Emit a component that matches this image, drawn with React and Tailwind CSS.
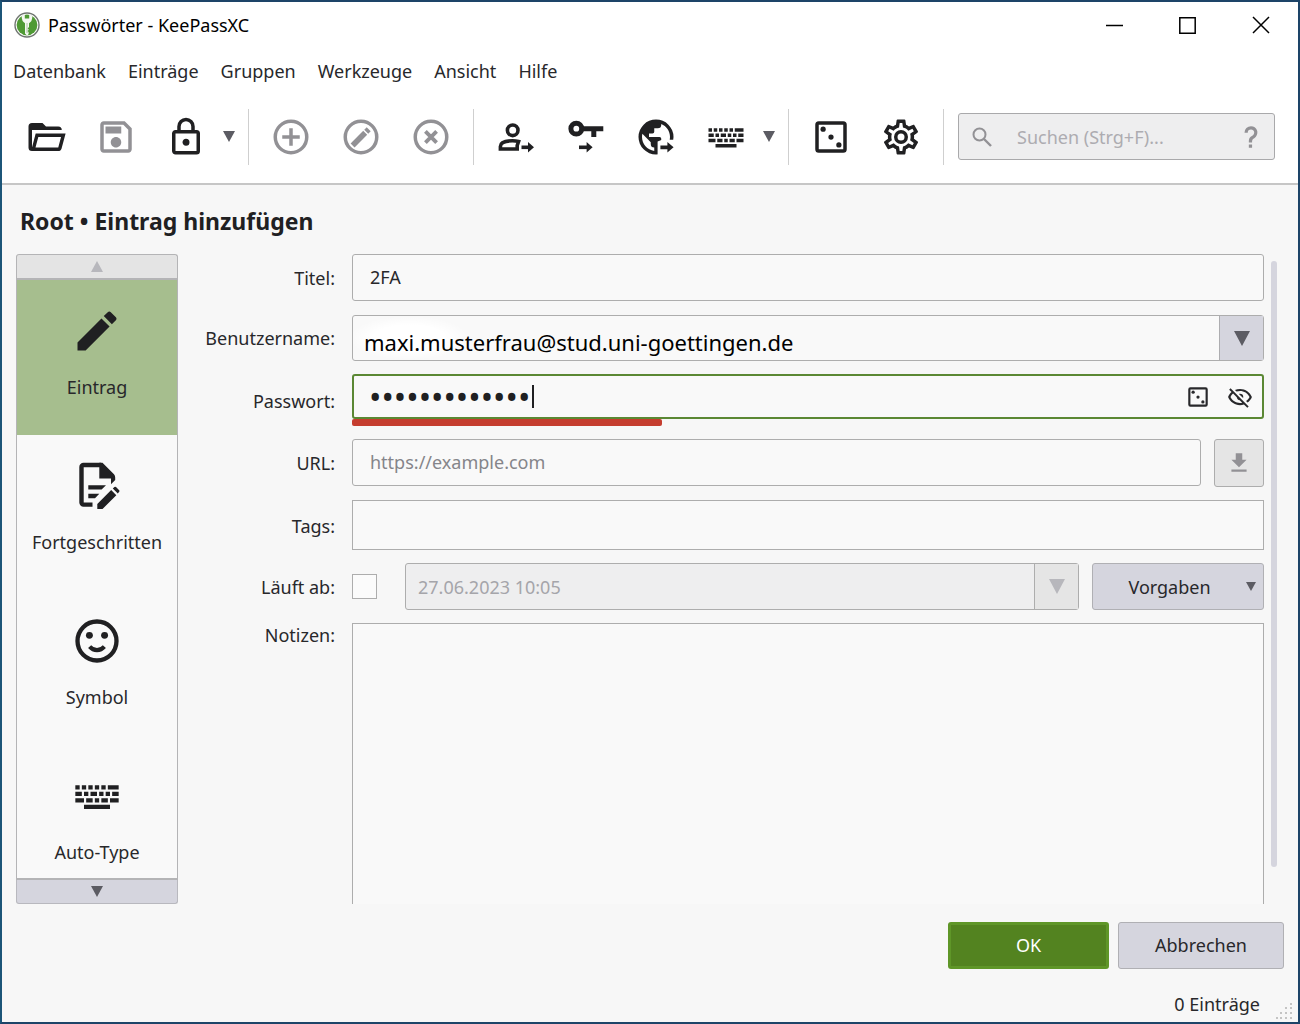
import React, { useState } from 'react';

const ICONS = {
  folder: 'M6.1,10L4,18V8H21A2,2 0 0,0 19,6H12L10,4H4A2,2 0 0,0 2,6V18A2,2 0 0,0 4,20H19C19.9,20 20.7,19.4 20.9,18.5L23.2,10H6.1M19,18H6L7.6,12H20.6L19,18Z',
  save: 'M17 3H5C3.89 3 3 3.9 3 5V19C3 20.1 3.89 21 5 21H19C20.1 21 21 20.1 21 19V7L17 3M19 19H5V5H16.17L19 7.83V19M12 12C10.34 12 9 13.34 9 15S10.34 18 12 18 15 16.66 15 15 13.66 12 12 12M6 6H15V10H6V6Z',
  lock: 'M12,17C10.89,17 10,16.1 10,15C10,13.89 10.89,13 12,13A2,2 0 0,1 14,15A2,2 0 0,1 12,17M18,20V10H6V20H18M18,8A2,2 0 0,1 20,10V20A2,2 0 0,1 18,22H6C4.89,22 4,21.1 4,20V10C4,8.89 4.89,8 6,8H7V6A5,5 0 0,1 12,1A5,5 0 0,1 17,6V8H18M12,3A3,3 0 0,0 9,6V8H15V6A3,3 0 0,0 12,3Z',
  keyboard: 'M6,16H18V18H6V16M6,13V15H2V13H6M7,15V13H10V15H7M11,15V13H13V15H11M14,15V13H17V15H14M18,15V13H22V15H18M2,10H5V12H2V10M19,12V10H22V12H19M18,12H16V10H18V12M8,12H6V10H8V12M12,12H9V10H12V12M15,12H13V10H15V12M2,9V7H4V9H2M5,9V7H7V9H5M8,9V7H10V9H8M11,9V7H13V9H11M14,9V7H16V9H14M17,9V7H22V9H17Z',
  gear: 'M12,8A4,4 0 0,1 16,12A4,4 0 0,1 12,16A4,4 0 0,1 8,12A4,4 0 0,1 12,8M12,10A2,2 0 0,0 10,12A2,2 0 0,0 12,14A2,2 0 0,0 14,12A2,2 0 0,0 12,10M10,22C9.75,22 9.54,21.82 9.5,21.58L9.13,18.93C8.5,18.68 7.96,18.34 7.44,17.94L4.95,18.95C4.73,19.03 4.46,18.95 4.34,18.73L2.34,15.27C2.21,15.05 2.27,14.78 2.46,14.63L4.57,12.97L4.5,12L4.57,11L2.46,9.37C2.27,9.22 2.21,8.95 2.34,8.73L4.34,5.27C4.46,5.05 4.73,4.96 4.95,5.05L7.44,6.05C7.96,5.66 8.5,5.32 9.13,5.07L9.5,2.42C9.54,2.18 9.75,2 10,2H14C14.25,2 14.46,2.18 14.5,2.42L14.87,5.07C15.5,5.32 16.04,5.66 16.56,6.05L19.05,5.05C19.27,4.96 19.54,5.05 19.66,5.27L21.66,8.73C21.79,8.95 21.73,9.22 21.54,9.37L19.43,11L19.5,12L19.43,13L21.54,14.63C21.73,14.78 21.79,15.05 21.66,15.27L19.66,18.73C19.54,18.95 19.27,19.04 19.05,18.95L16.56,17.95C16.04,18.34 15.5,18.68 14.87,18.93L14.5,21.58C14.46,21.82 14.25,22 14,22H10M11.25,4L10.88,6.61C9.68,6.86 8.62,7.5 7.85,8.39L5.44,7.35L4.69,8.65L6.8,10.2C6.4,11.37 6.4,12.64 6.8,13.8L4.68,15.36L5.43,16.66L7.86,15.62C8.63,16.5 9.68,17.14 10.87,17.38L11.24,20H12.76L13.13,17.39C14.32,17.14 15.37,16.5 16.14,15.62L18.57,16.66L19.32,15.36L17.2,13.81C17.6,12.64 17.6,11.37 17.2,10.2L19.31,8.65L18.56,7.35L16.15,8.39C15.38,7.5 14.32,6.86 13.12,6.62L12.75,4H11.25Z',
  pencil: 'M20.71,7.04C21.1,6.65 21.1,6 20.71,5.63L18.37,3.29C18,2.9 17.35,2.9 16.96,3.29L15.12,5.12L18.87,8.87M3,17.25V21H6.75L17.81,9.93L14.06,6.18L3,17.25Z',
  help: 'M10,19H13V22H10V19M12,2C17.35,2.22 19.68,7.62 16.5,11.67C15.67,12.67 14.33,13.33 13.67,14.17C13,15 13,16 13,17H10C10,15.33 10,13.92 10.67,12.92C11.33,11.92 12.67,11.33 13.5,10.67C15.92,8.43 15.32,5.26 12,5A3,3 0 0,0 9,8H6A6,6 0 0,1 12,2Z',
  eyeOff: 'M2,5.27L3.28,4L20,20.72L18.73,22L15.65,18.92C14.5,19.3 13.28,19.5 12,19.5C7,19.5 2.73,16.39 1,12C1.69,10.24 2.79,8.69 4.19,7.46L2,5.27M12,9A3,3 0 0,1 15,12C15,12.35 14.94,12.69 14.83,13L11,9.17C11.31,9.06 11.65,9 12,9M12,4.5C17,4.5 21.27,7.61 23,12C22.18,14.08 20.79,15.88 19,17.19L17.58,15.76C18.94,14.82 20.06,13.54 20.82,12C19.17,8.64 15.76,6.5 12,6.5C10.91,6.5 9.84,6.68 8.84,7L7.3,5.47C8.74,4.85 10.33,4.5 12,4.5M3.18,12C4.83,15.36 8.24,17.5 12,17.5C12.69,17.5 13.37,17.43 14,17.29L11.72,15C10.29,14.85 9.15,13.71 9,12.28L5.6,8.87C4.61,9.72 3.78,10.78 3.18,12Z',
  download: 'M5,20H19V18H5M19,9H15V3H9V9H5L12,16L19,9Z',
  earth: 'M17.9,17.39C17.64,16.59 16.89,16 16,16H15V13A1,1 0 0,0 14,12H8V10H10A1,1 0 0,0 11,9V7H13A2,2 0 0,0 15,5V4.59C17.93,5.77 20,8.64 20,12C20,14.08 19.2,15.97 17.9,17.39M11,19.93C7.05,19.44 4,16.08 4,12C4,11.38 4.08,10.78 4.21,10.21L9,15V16A2,2 0 0,0 11,18M12,2A10,10 0 0,0 2,12A10,10 0 0,0 12,22A10,10 0 0,0 22,12A10,10 0 0,0 12,2Z',
};

const Icon = ({ name, className }) => (
  <svg viewBox="0 0 24 24" fill="currentColor" fillRule="evenodd" className={className} aria-hidden="true">
    <path d={ICONS[name]} />
  </svg>
);

const Dice = ({ className }) => (
  <svg viewBox="0 0 24 24" fill="currentColor" className={className} aria-hidden="true">
    <rect x="4" y="4" width="16" height="16" rx="1" fill="none" stroke="currentColor" strokeWidth="2" />
    <circle cx="7.5" cy="7.5" r="1.5" />
    <circle cx="12" cy="12" r="1.5" />
    <circle cx="16.5" cy="16.5" r="1.5" />
  </svg>
);

const Circled = ({ children }) => (
  <svg viewBox="0 0 24 24" fill="none" stroke="currentColor" strokeWidth="2" className="size-[42px]" aria-hidden="true">
    <circle cx="12" cy="12" r="9" />
    {children}
  </svg>
);

const CopyUser = () => (
  <svg viewBox="0 0 42 42" fill="none" stroke="currentColor" strokeWidth="3.6" className="size-[42px]" aria-hidden="true">
    <circle cx="17.7" cy="14.3" r="5.3" />
    <path d="M5.4 33V30.5C5.4 26.2 12 24.8 17.5 24.8C20 24.8 21.6 25 23.6 25.5L22.2 29.5V33Z" />
    <path d="M26.5 31.3H34" />
    <path d="M33 26L39 31.3L33 36.6Z" fill="currentColor" stroke="none" />
  </svg>
);

const CopyPassword = () => (
  <svg viewBox="0 0 42 42" fill="none" stroke="currentColor" strokeWidth="5" className="size-[42px]" aria-hidden="true">
    <circle cx="11.3" cy="12.7" r="5.4" />
    <path d="M18 12.8H38.3M28.8 13V21" />
    <path d="M14 31.3H23" strokeWidth="3.6" />
    <path d="M21.6 26L27.6 31.3L21.6 36.6Z" fill="currentColor" stroke="none" />
  </svg>
);

const CopyUrl = () => (
  <svg viewBox="0 0 42 42" fill="currentColor" className="size-[42px]" aria-hidden="true">
    <path transform="scale(1.75)" fillRule="evenodd" d={ICONS.earth} />
    <path d="M22.6 25.5L27 23.7H40V42H22.6Z" fill="#fff" />
    <path d="M25.4 29.4H32.4V26L38.6 31.3L32.4 36.6V33.2H25.4Z" />
  </svg>
);

const DocumentEdit = () => (
  <svg viewBox="0 0 52 52" fill="currentColor" className="size-[52px]" aria-hidden="true">
    <path d="M21.5 44.6H12.5A2 2 0 0 1 10.5 42.6V7A2 2 0 0 1 12.5 5H30" fill="none" stroke="currentColor" strokeWidth="4.4" />
    <path d="M28.3 2.8H31.5L43 14.2Q44.2 15.6 44.2 17.5V20L40 24.2V18.6H28.3Z" />
    <path d="M17.3 25.2H35L30.6 29.6H17.3ZM17.3 33.8H28.3L24 38.2H17.3Z" />
    <path d="M26.3 49V44L40.2 30.1L45.3 35.2L31.5 49ZM41.8 28.5L43.4 27Q44.2 26.4 45 27L48.2 30.2Q48.9 31 48.2 31.8L46.8 33.4Z" />
  </svg>
);

const Smiley = () => (
  <svg viewBox="0 0 24 24" fill="none" stroke="currentColor" strokeWidth="2" className="size-[52px]" aria-hidden="true">
    <circle cx="12" cy="12" r="9" />
    <circle cx="8.5" cy="9.4" r="1.6" fill="currentColor" stroke="none" />
    <circle cx="15.5" cy="9.4" r="1.6" fill="currentColor" stroke="none" />
    <path d="M8.6 14.6Q10 16.2 12 16.2T15.4 14.6" strokeWidth="1.9" />
  </svg>
);

const Logo = () => (
  <svg viewBox="0 0 26 26" className="size-[26px]" aria-hidden="true">
    <circle cx="13" cy="13" r="12" fill="#fff" stroke="#6f7570" strokeWidth="1.4" />
    <circle cx="13" cy="13" r="10.4" fill="#4f9a34" />
    <path d="M7.6 3.6Q7.6 9.8 11 11.2V21.6L13.2 23.8L14.6 22V20L13.4 19L14.9 17.8L13.6 16.5L15 15V11.2Q18.4 9.8 18.4 3.6L15.2 2.4V6.4H10.8V2.4Z" fill="#f4f8f1" />
    <path d="M13 11V21" stroke="#9cb592" strokeWidth="0.8" />
  </svg>
);

const Triangle = ({ up, className }) => (
  <svg viewBox="0 0 12 10" preserveAspectRatio="none" fill="currentColor" className={className} aria-hidden="true">
    <path d={up ? 'M0 10L6 0L12 10Z' : 'M0 0H12L6 10Z'} />
  </svg>
);

const ToolButton = ({ label, disabled, children }) => (
  <button
    type="button"
    aria-label={label}
    disabled={disabled}
    className="flex size-[42px] shrink-0 items-center justify-center text-[#202022] disabled:text-[#929195]"
  >
    {children}
  </button>
);

const MenuArrow = ({ label }) => (
  <button type="button" aria-label={label} className="flex h-[42px] w-3 shrink-0 items-center text-[#5c5c63]">
    <Triangle className="h-[11px] w-3" />
  </button>
);

const Separator = () => <div className="h-14 w-px shrink-0 bg-[#cfcfcf]" />;

const menus = ['Datenbank', 'Einträge', 'Gruppen', 'Werkzeuge', 'Ansicht', 'Hilfe'];

const pages = [
  { id: 'entry', label: 'Eintrag', icon: <Icon name="pencil" className="size-[52px]" /> },
  { id: 'advanced', label: 'Fortgeschritten', icon: <DocumentEdit /> },
  { id: 'icon', label: 'Symbol', icon: <Smiley /> },
  { id: 'autotype', label: 'Auto-Type', icon: <Icon name="keyboard" className="size-[52px]" /> },
];

const fieldClass = 'h-[47px] w-full min-w-0 rounded-[3px] border border-[#adadad] bg-[#f9f9f9] px-[17px] pb-0.5 outline-none placeholder:text-[#85858a]';
const labelClass = 'text-right';

const App = () => {
  const [page, setPage] = useState('entry');
  const [title, setTitle] = useState('2FA');
  const [username, setUsername] = useState('maxi.musterfrau@stud.uni-goettingen.de');
  const [password, setPassword] = useState('1234567890123');
  const [url, setUrl] = useState('');
  const [tags, setTags] = useState('');
  const [expires, setExpires] = useState(false);
  const [notes, setNotes] = useState('');

  return (
    <div className="flex h-screen flex-col overflow-hidden border-2 border-[#1d4468] border-l-[#1c5578] bg-[#f7f7f7] font-['Noto_Sans',sans-serif] text-[18px] leading-6 text-[#28282b]">
      {/* Title bar */}
      <header className="flex h-[46px] shrink-0 items-center bg-white pr-7 pl-3 text-black">
        <Logo />
        <h1 className="ml-2">Passwörter - KeePassXC</h1>
        <div className="ml-auto flex items-center gap-14">
          <button type="button" aria-label="Minimieren" className="w-[17px]">
            <svg viewBox="0 0 17 17" stroke="currentColor" strokeWidth="1.5" aria-hidden="true">
              <path d="M0 8.5H17" />
            </svg>
          </button>
          <button type="button" aria-label="Maximieren" className="w-[17px]">
            <svg viewBox="0 0 17 17" fill="none" stroke="currentColor" strokeWidth="1.5" aria-hidden="true">
              <path d="M0.8 0.8H16.2V16.2H0.8Z" />
            </svg>
          </button>
          <button type="button" aria-label="Schließen" className="size-[18px]">
            <svg viewBox="0 0 18 18" stroke="currentColor" strokeWidth="1.5" aria-hidden="true">
              <path d="M1 1L17 17M17 1L1 17" />
            </svg>
          </button>
        </div>
      </header>

      {/* Menu bar */}
      <nav className="flex h-[46px] shrink-0 items-center gap-[22px] bg-white px-[11px]">
        {menus.map(menu => (
          <button key={menu} type="button">{menu}</button>
        ))}
      </nav>

      {/* Toolbar */}
      <div className="flex h-[91px] shrink-0 items-center border-b-2 border-[#c6c6c6] bg-white pr-[23px] pb-1 pl-[23px]">
        <div className="flex items-center gap-7 pr-4">
          <ToolButton label="Datenbank öffnen"><Icon name="folder" className="size-[42px]" /></ToolButton>
          <ToolButton label="Speichern" disabled><Icon name="save" className="size-[42px]" /></ToolButton>
          <ToolButton label="Sperren"><Icon name="lock" className="size-[42px]" /></ToolButton>
        </div>
        <MenuArrow label="Sperroptionen" />
        <div className="w-[13px]" />
        <Separator />
        <div className="flex items-center gap-7 px-[21px]">
          <ToolButton label="Eintrag hinzufügen" disabled>
            <Circled><path d="M12 7V17M7 12H17" /></Circled>
          </ToolButton>
          <ToolButton label="Eintrag bearbeiten" disabled>
            <Circled>
              <path d="M7.2 16.8L14.4 9.6" strokeWidth="3.2" />
              <path d="M15 9L16.4 7.6" strokeWidth="3.2" />
            </Circled>
          </ToolButton>
          <ToolButton label="Eintrag löschen" disabled>
            <Circled><path d="M8.8 8.8L15.2 15.2M15.2 8.8L8.8 15.2" strokeWidth="2.2" /></Circled>
          </ToolButton>
        </div>
        <Separator />
        <div className="flex items-center gap-7 pr-4 pl-[21px]">
          <ToolButton label="Benutzername kopieren"><CopyUser /></ToolButton>
          <ToolButton label="Passwort kopieren"><CopyPassword /></ToolButton>
          <ToolButton label="URL kopieren"><CopyUrl /></ToolButton>
          <ToolButton label="Auto-Type"><Icon name="keyboard" className="size-[42px]" /></ToolButton>
        </div>
        <MenuArrow label="Auto-Type-Optionen" />
        <div className="w-[13px]" />
        <Separator />
        <div className="flex items-center gap-7 px-[21px]">
          <ToolButton label="Passwortgenerator"><Dice className="size-[42px]" /></ToolButton>
          <ToolButton label="Einstellungen"><Icon name="gear" className="size-[42px]" /></ToolButton>
        </div>
        <Separator />
        <div className="ml-[14px] flex h-[47px] min-w-0 flex-1 items-center rounded-[3px] border border-[#a9a9ab] bg-[#eeeeef] pr-[10px] pl-3 text-[#929195]">
          <svg viewBox="0 0 22 22" fill="none" stroke="currentColor" strokeWidth="2" className="size-[22px] shrink-0" aria-hidden="true">
            <circle cx="8.5" cy="8.5" r="6" />
            <path d="M13 13L20 20" strokeWidth="2.4" />
          </svg>
          <input
            type="search"
            aria-label="Suchen"
            placeholder="Suchen (Strg+F)..."
            className="min-w-0 flex-1 bg-transparent px-6 outline-none placeholder:text-[#adacb1]"
          />
          <button type="button" aria-label="Suchhilfe" className="shrink-0">
            <Icon name="help" className="size-[26px]" />
          </button>
        </div>
      </div>

      <h2 className="mt-5 shrink-0 pl-[18px] text-[23px] leading-8 font-bold text-[#202022]">Root • Eintrag hinzufügen</h2>

      <main className="mt-[17px] flex min-h-0 flex-1 pr-[21px] pl-[14px]">
        {/* Page list */}
        <nav className="flex w-[162px] shrink-0 flex-col">
          <button type="button" disabled aria-label="Nach oben" className="flex h-6 shrink-0 items-center justify-center rounded-t-[3px] border border-b-0 border-[#b4b4b6] bg-[#e4e4e4] text-[#b7b7bc]">
            <Triangle up className="h-[11px] w-3" />
          </button>
          <div className="min-h-0 flex-1 overflow-hidden border-x border-y-2 border-[#b4b4b6] bg-[#f9f9f9]">
            {pages.map(p => (
              <button
                key={p.id}
                type="button"
                onClick={() => setPage(p.id)}
                className={`flex h-[155px] w-full flex-col items-center pt-[25px] ${page === p.id ? 'bg-[#a6be8e]' : ''}`}
              >
                <span className="text-[#202022]">{p.icon}</span>
                <span className="mt-[18px]">{p.label}</span>
              </button>
            ))}
          </div>
          <button type="button" aria-label="Nach unten" className="flex h-6 shrink-0 items-center justify-center rounded-b-[3px] border border-t-0 border-[#b8b8be] bg-[#d5d5de] text-[#5c5c63]">
            <Triangle className="h-[11px] w-3" />
          </button>
        </nav>

        {/* Entry form */}
        <form className="grid min-w-0 flex-1 auto-rows-min grid-cols-[157px_1fr] gap-x-[17px] overflow-hidden" onSubmit={e => e.preventDefault()}>
          <label htmlFor="title" className={`${labelClass} pt-3`}>Titel:</label>
          <input id="title" value={title} onChange={e => setTitle(e.target.value)} className={fieldClass} />

          <label htmlFor="username" className={`${labelClass} mt-[14px] pt-[11px]`}>Benutzername:</label>
          <div className="mt-[14px] flex h-[46px] rounded-[3px] border border-[#adadad] bg-[#f9f9f9]">
            <input
              id="username"
              value={username}
              onChange={e => setUsername(e.target.value)}
              className="min-w-0 flex-1 bg-[radial-gradient(ellipse_60px_22px_at_56px_22px,#ffffff_60%,transparent)] px-[11px] pt-2 text-[22px] leading-9 text-black outline-none"
            />
            <button type="button" aria-label="Benutzernamen anzeigen" className="flex w-11 items-center justify-center border-l border-[#adadb0] bg-[#d5d5de] text-[#5c5c63]">
              <Triangle className="h-[15px] w-4" />
            </button>
          </div>

          <label htmlFor="password" className={`${labelClass} mt-[13px] pt-[15px]`}>Passwort:</label>
          <div className="mt-[13px]">
            <div className="relative flex h-[45px] items-center rounded-[3px] border-2 border-[#5b8834] bg-[#f9f9f9] pr-[9px]">
              <input
                id="password"
                type="password"
                value={password}
                onChange={e => setPassword(e.target.value)}
                className="h-full min-w-0 flex-1 bg-transparent pl-[15px] text-[33px] text-[#202022] outline-none"
              />
              <span className="absolute top-[9px] left-[178px] h-[23px] w-0.5 bg-[#202022]" />
              <button type="button" aria-label="Passwort generieren"><Dice className="size-[26px]" /></button>
              <button type="button" aria-label="Passwort anzeigen" className="ml-4"><Icon name="eyeOff" className="size-[26px]" /></button>
            </div>
            <div className="h-[7px] w-[34%] rounded-[2px] bg-[#c53d2f]" />
          </div>

          <label htmlFor="url" className={`${labelClass} mt-[13px] pt-3`}>URL:</label>
          <div className="mt-[13px] flex gap-[13px]">
            <input id="url" placeholder="https://example.com" value={url} onChange={e => setUrl(e.target.value)} className={fieldClass} />
            <button type="button" disabled aria-label="Favicon herunterladen" className="flex h-12 w-[50px] shrink-0 items-center justify-center rounded-[3px] border border-[#adadad] bg-[#e5e5e5] text-[#929195]">
              <Icon name="download" className="size-[26px]" />
            </button>
          </div>

          <label htmlFor="tags" className={`${labelClass} mt-[13px] pt-[14px]`}>Tags:</label>
          <input id="tags" value={tags} onChange={e => setTags(e.target.value)} className="mt-[13px] h-[50px] w-full border border-[#adadad] bg-[#f9f9f9] px-[17px] outline-none" />

          <label htmlFor="expires" className={`${labelClass} mt-[13px] pt-3`}>Läuft ab:</label>
          <div className="mt-[13px] flex items-center">
            <input
              id="expires"
              type="checkbox"
              checked={expires}
              onChange={e => setExpires(e.target.checked)}
              className="size-[25px] shrink-0 appearance-none border border-[#adadad] bg-[#fbfbfb] checked:bg-[#53822a]"
            />
            <div className="ml-7 flex h-[47px] min-w-0 flex-1 rounded-[3px] border border-[#adadad] bg-[#eeeeef]">
              <input aria-label="Ablaufdatum" disabled={!expires} defaultValue="27.06.2023 10:05" className="min-w-0 flex-1 px-3 disabled:text-[#a5a5aa]" />
              <button type="button" aria-label="Kalender" disabled={!expires} className="flex w-11 items-center justify-center border-l border-[#adadad] bg-[#e5e5e5] text-[#b7b7bc]">
                <Triangle className="h-[15px] w-4" />
              </button>
            </div>
            <button type="button" className="ml-[13px] flex h-[47px] w-[172px] shrink-0 items-center rounded-[3px] border border-[#b0b0b4] bg-[#d5d5de] pr-[7px]">
              <span className="flex-1">Vorgaben</span>
              <Triangle className="h-[9px] w-[10px] text-[#5c5c63]" />
            </button>
          </div>

          <label htmlFor="notes" className={`${labelClass} mt-[13px]`}>Notizen:</label>
          <textarea id="notes" value={notes} onChange={e => setNotes(e.target.value)} className="mt-[13px] block h-[320px] w-full resize-none border border-[#adadad] bg-[#f9f9f9] px-4 py-2 outline-none" />
        </form>

        {/* Scroll bar */}
        <div className="ml-[7px] flex w-[6px] shrink-0 pt-[7px] pb-[37px]">
          <div className="w-full rounded-full bg-[#d5d5de]" />
        </div>
      </main>

      <div className="mt-[18px] flex shrink-0 justify-end gap-[9px] pr-[14px]">
        <button type="button" className="h-[47px] w-[161px] rounded-[3px] border-3 border-[#5f9628] bg-[#538320] pb-0.5 text-white">OK</button>
        <button type="button" className="h-[47px] w-[166px] rounded-[3px] border border-[#b0b0b4] bg-[#d5d5de] pb-0.5">Abbrechen</button>
      </div>

      {/* Status bar */}
      <footer className="flex h-[53px] shrink-0 items-end justify-end pr-1 pb-0.5">
        <span className="pb-1">0 Einträge</span>
        <svg viewBox="0 0 18 18" fill="#c4c4c4" className="ml-4 size-[18px]" aria-hidden="true">
          <path d="M14 1h2v2h-2zM9 5h2v2H9zM14 5h2v2h-2zM4 10h2v2H4zM9 10h2v2H9zM14 10h2v2h-2zM0 15h2v2H0zM4 15h2v2H4zM9 15h2v2H9zM14 15h2v2h-2z" />
        </svg>
      </footer>
    </div>
  );
};

export default App;
